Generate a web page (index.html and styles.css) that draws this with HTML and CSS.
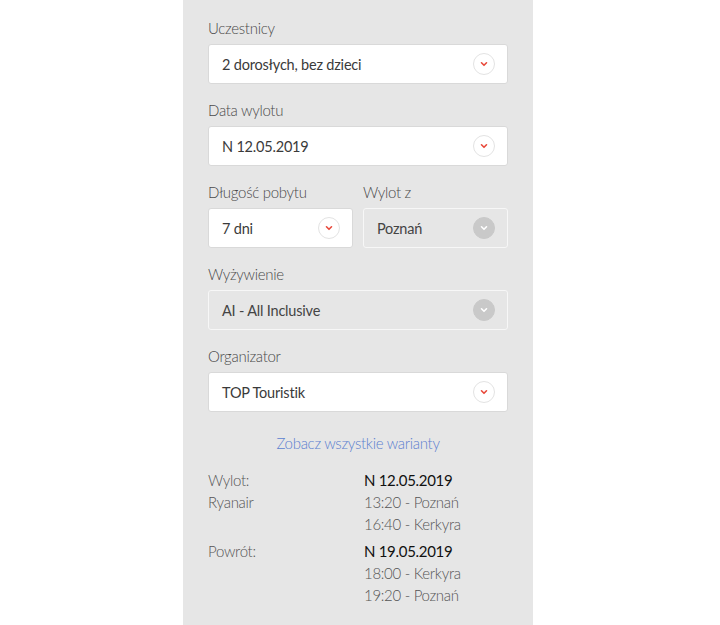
FILE: index.html
```html
<!DOCTYPE html>
<html lang="pl">
<head>
<meta charset="utf-8">
<link rel="stylesheet" href="styles.css">
</head>
<body>
<div class="page">
  <div class="panel">
    <div class="field">
      <div class="label">Uczestnicy</div>
      <div class="select"><span>2 dorosłych, bez dzieci</span><span class="chev"><svg viewBox="0 0 10 10" width="10" height="10"><path d="M2.5 3.8 L5 6.3 L7.5 3.8" fill="none" stroke="#e8483a" stroke-width="1.6" stroke-linecap="round" stroke-linejoin="round"/></svg></span></div>
    </div>
    <div class="field">
      <div class="label">Data wylotu</div>
      <div class="select"><span>N 12.05.2019</span><span class="chev"><svg viewBox="0 0 10 10" width="10" height="10"><path d="M2.5 3.8 L5 6.3 L7.5 3.8" fill="none" stroke="#e8483a" stroke-width="1.6" stroke-linecap="round" stroke-linejoin="round"/></svg></span></div>
    </div>
    <div class="row">
      <div class="field">
        <div class="label">Długość pobytu</div>
        <div class="select"><span>7 dni</span><span class="chev"><svg viewBox="0 0 10 10" width="10" height="10"><path d="M2.5 3.8 L5 6.3 L7.5 3.8" fill="none" stroke="#e8483a" stroke-width="1.6" stroke-linecap="round" stroke-linejoin="round"/></svg></span></div>
      </div>
      <div class="field">
        <div class="label">Wylot z</div>
        <div class="select disabled"><span>Poznań</span><span class="chev"><svg viewBox="0 0 10 10" width="10" height="10"><path d="M2.5 3.8 L5 6.3 L7.5 3.8" fill="none" stroke="#ffffff" stroke-width="1.6" stroke-linecap="round" stroke-linejoin="round"/></svg></span></div>
      </div>
    </div>
    <div class="field">
      <div class="label">Wyżywienie</div>
      <div class="select disabled"><span>AI - All Inclusive</span><span class="chev"><svg viewBox="0 0 10 10" width="10" height="10"><path d="M2.5 3.8 L5 6.3 L7.5 3.8" fill="none" stroke="#ffffff" stroke-width="1.6" stroke-linecap="round" stroke-linejoin="round"/></svg></span></div>
    </div>
    <div class="field">
      <div class="label">Organizator</div>
      <div class="select"><span>TOP Touristik</span><span class="chev"><svg viewBox="0 0 10 10" width="10" height="10"><path d="M2.5 3.8 L5 6.3 L7.5 3.8" fill="none" stroke="#e8483a" stroke-width="1.6" stroke-linecap="round" stroke-linejoin="round"/></svg></span></div>
    </div>
    <a class="link" href="#">Zobacz wszystkie warianty</a>
    <div class="details">
      <div class="block">
        <div class="col">
          <div>Wylot:</div>
          <div>Ryanair</div>
        </div>
        <div class="col">
          <div class="date">N 12.05.2019</div>
          <div>13:20 - Poznań</div>
          <div>16:40 - Kerkyra</div>
        </div>
      </div>
      <div class="block">
        <div class="col">
          <div>Powrót:</div>
        </div>
        <div class="col">
          <div class="date">N 19.05.2019</div>
          <div>18:00 - Kerkyra</div>
          <div>19:20 - Poznań</div>
        </div>
      </div>
    </div>
  </div>
</div>
</body>
</html>
```
FILE: styles.css
```css
html, body {
  margin: 0;
  padding: 0;
  background: #ffffff;
}
body {
  font-family: "Lato", "Open Sans", sans-serif;
  color: #333;
}
.page {
  display: flex;
  justify-content: center;
  padding-right: 4px;
  height: 625px;
}
.panel {
  width: 300px;
  background: #e6e6e6;
  padding: 18px 25px 0 25px;
  box-sizing: content-box;
}
.field {
  margin-bottom: 16px;
}
.label {
  font-size: 15px;
  line-height: 20px;
  font-weight: 300;
  color: #4a4a4a;
  margin-bottom: 6px;
  letter-spacing: -0.3px;
}
.select {
  height: 40px;
  box-sizing: border-box;
  background: #fff;
  border: 1px solid #d9d9d9;
  border-radius: 3px;
  display: flex;
  align-items: center;
  justify-content: space-between;
  padding: 0 12px 0 13px;
  font-size: 14.5px;
  color: #3a3a3a;
  letter-spacing: -0.2px;
}
.chev {
  width: 22px;
  height: 22px;
  box-sizing: border-box;
  border: 1px solid #e3e3e3;
  border-radius: 50%;
  display: flex;
  align-items: center;
  justify-content: center;
}
.select.disabled {
  background: transparent;
  border-color: #f7f7f7;
  color: #444;
}
.select.disabled .chev {
  background: #c9c9c9;
  border-color: #c9c9c9;
}
.row {
  display: flex;
  gap: 10px;
}
.row .field {
  flex: 1;
}
.link {
  display: block;
  text-align: center;
  color: #5c7fd0;
  text-decoration: none;
  font-size: 15px;
  font-weight: 300;
  line-height: 20px;
  margin-top: 21px;
  letter-spacing: -0.3px;
}
.details {
  margin-top: 16px;
  font-size: 15px;
  font-weight: 300;
  color: #555;
  line-height: 22px;
  letter-spacing: -0.3px;
}
.block {
  display: flex;
  margin-bottom: 5px;
}
.block .col:first-child {
  width: 156px;
}
.date {
  color: #111;
  font-weight: 400;
}
```
